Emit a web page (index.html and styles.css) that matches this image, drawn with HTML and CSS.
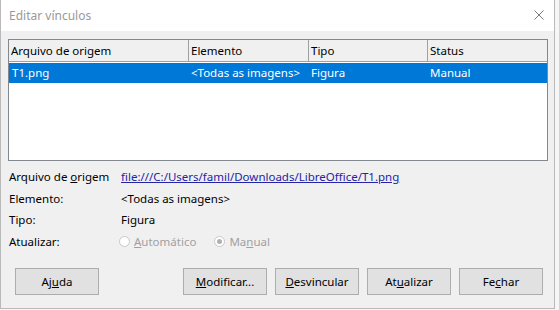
FILE: index.html
```html
<!DOCTYPE html>
<html>
<head>
<meta charset="utf-8">
<link rel="stylesheet" href="styles.css">
</head>
<body>
<div class="window">
  <div class="titlebar">
    <span class="title">Editar vínculos</span>
    <svg class="close" width="10" height="10" viewBox="0 0 10 10"><path d="M0.5 0.5L9.5 9.5M9.5 0.5L0.5 9.5" stroke="#7a7a7a" stroke-width="1" fill="none"/></svg>
  </div>
  <div class="content">
    <div class="list">
      <div class="row head">
        <div class="c c1">Arquivo de origem</div>
        <div class="c c2">Elemento</div>
        <div class="c c3">Tipo</div>
        <div class="c c4">Status</div>
      </div>
      <div class="row sel">
        <div class="c c1">T1.png</div>
        <div class="c c2">&lt;Todas as imagens&gt;</div>
        <div class="c c3">Figura</div>
        <div class="c c4">Manual</div>
      </div>
    </div>
    <div class="info">
      <div class="lbl">Arquivo de <u>o</u>rigem</div>
      <div class="val"><a class="link">file:///C:/Users/famil/Downloads/LibreOffice/T1.png</a></div>
      <div class="lbl">Elemento:</div>
      <div class="val">&lt;Todas as imagens&gt;</div>
      <div class="lbl">Tipo:</div>
      <div class="val">Figura</div>
      <div class="lbl">Atualizar:</div>
      <div class="val radios">
        <span class="radio"><span class="circle"></span><span><u>A</u>utomático</span></span>
        <span class="radio"><span class="circle on"></span><span>Ma<u>n</u>ual</span></span>
      </div>
    </div>
    <div class="buttons">
      <button class="btn">Aj<u>u</u>da</button>
      <div class="spacer"></div>
      <button class="btn"><u>M</u>odificar...</button>
      <button class="btn"><u>D</u>esvincular</button>
      <button class="btn">At<u>u</u>alizar</button>
      <button class="btn">Fe<u>c</u>har</button>
    </div>
  </div>
</div>
</body>
</html>
```
FILE: styles.css
```css
html, body {
  margin: 0;
  padding: 0;
  background: #f6f6f6;
  font-family: "Noto Sans", "Open Sans", sans-serif;
  font-size: 11.5px;
  color: #000;
}
.window {
  width: 553px;
  height: 308px;
  border-left: 1px solid #b9b9b9;
  border-right: 1px solid #b9b9b9;
  border-bottom: 1px solid #b9b9b9;
  background: #f0f0f0;
  display: flex;
  flex-direction: column;
}
.titlebar {
  height: 31px;
  background: #fff;
  display: flex;
  align-items: center;
  justify-content: space-between;
  padding: 0 10px 0 8px;
}
.title {
  color: #999;
  font-size: 12px;
  margin-top: -1px;
}
.close {
  margin-top: -1px;
}
.content {
  flex: 1;
  padding: 8px 6px 0 7px;
  display: flex;
  flex-direction: column;
}
.list {
  width: 538px;
  height: 120px;
  border: 1px solid #828790;
  background: #fff;
}
.row {
  display: flex;
}
.c {
  box-sizing: border-box;
  padding-left: 2px;
  white-space: nowrap;
  overflow: hidden;
}
.c1 { width: 180px; }
.c2 { width: 120px; }
.c3 { width: 119px; }
.c4 { width: 119px; }
.head {
  height: 22px;
  line-height: 21px;
  background: #f0f0f0;
  border-bottom: 1px solid #a0a0a0;
  box-sizing: border-box;
}
.head .c {
  border-right: 1px solid #a0a0a0;
}
.head .c4 { border-right: none; }
.sel {
  height: 20px;
  line-height: 19px;
  margin-top: 1px;
  background: #0078d7;
  color: #fff;
}
.sel .c1 { padding-left: 3px; }
.info {
  margin-top: 5px;
  display: grid;
  grid-template-columns: 112px 1fr;
  grid-auto-rows: 21.5px;
  align-items: center;
  padding-left: 1px;
}
.link {
  color: #2424a8;
  text-decoration: underline;
}
.radios {
  display: flex;
  gap: 18px;
  color: #a0a0a0;
  margin-left: -2px;
}
.radio {
  display: flex;
  align-items: center;
  gap: 4px;
}
.circle {
  width: 11px;
  height: 11px;
  border: 1px solid #c8c8c8;
  border-radius: 50%;
  background: #fff;
  box-sizing: border-box;
  display: inline-flex;
  align-items: center;
  justify-content: center;
}
.circle.on::after {
  content: "";
  width: 5px;
  height: 5px;
  border-radius: 50%;
  background: #b0b0b0;
}
.buttons {
  margin-top: 16px;
  display: flex;
  gap: 8px;
  padding-left: 7px;
}
.spacer {
  width: 68px;
}
.btn {
  width: 84px;
  height: 27px;
  background: #e1e1e1;
  border: 1px solid #adadad;
  font-family: inherit;
  font-size: 11.5px;
  color: #000;
  padding: 0;
}
```
